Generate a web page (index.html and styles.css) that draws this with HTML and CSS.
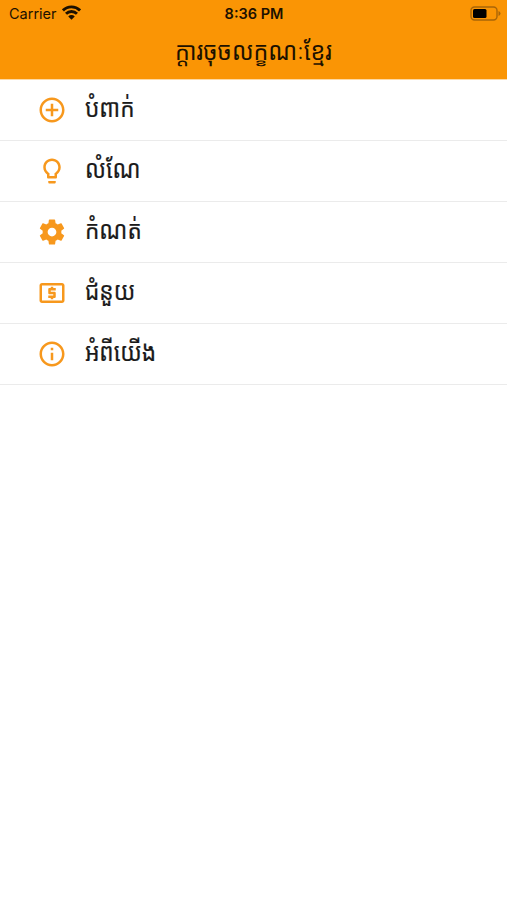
FILE: index.html
```html
<!DOCTYPE html>
<html lang="km">
<head>
    <meta charset="utf-8">
    <meta name="viewport" content="width=device-width, initial-scale=1">
    <title>ក្តារចុចលក្ខណៈខ្មែរ</title>
    <link rel="stylesheet" href="styles.css">
</head>
<body>

<header class="header">
    <div class="status-bar">
        <div class="carrier">
            <span>Carrier</span>
            <svg class="wifi" viewBox="0 0 18 14">
                <path d="M.9 5a11.5 11.5 0 0 1 16.2 0M3.8 8.2a7.4 7.4 0 0 1 10.4 0" fill="none" stroke="#1c1100" stroke-width="2.7"/>
                <path d="M9 13.8L5.9 10.7a4.4 4.4 0 0 1 6.2 0z" fill="#1c1100"/>
            </svg>
        </div>
        <div class="time">8:36 PM</div>
        <div class="battery">
            <svg viewBox="0 0 31 15">
                <rect x="1" y="1" width="26" height="13" rx="3.5" fill="none" stroke="#a86508" stroke-width="1.4"/>
                <rect x="3" y="3" width="13.5" height="9" rx="1.5" fill="#000"/>
                <path d="M28.5 5v5q2-.8 2-2.5t-2-2.5z" fill="#a86508"/>
            </svg>
        </div>
    </div>
    <h1 class="title">ក្តារចុចលក្ខណៈខ្មែរ</h1>
</header>

<ul class="menu">
    <li class="menu-item">
        <svg class="icon" viewBox="0 0 24 24"><path d="M13 7h-2v4H7v2h4v4h2v-4h4v-2h-4V7zm-1-5C6.48 2 2 6.48 2 12s4.48 10 10 10 10-4.48 10-10S17.52 2 12 2zm0 18c-4.41 0-8-3.59-8-8s3.59-8 8-8 8 3.59 8 8-3.59 8-8 8z"/></svg>
        <span class="label">បំពាក់</span>
    </li>
    <li class="menu-item">
        <svg class="icon" viewBox="0 0 24 24"><path d="M9 21c0 .55.45 1 1 1h4c.55 0 1-.45 1-1v-1H9v1zm3-19C8.14 2 5 5.14 5 9c0 2.38 1.19 4.47 3 5.74V17c0 .55.45 1 1 1h6c.55 0 1-.45 1-1v-2.26c1.81-1.27 3-3.36 3-5.74 0-3.86-3.14-7-7-7zm2.85 11.1l-.85.6V16h-4v-2.3l-.85-.6C7.8 12.16 7 10.63 7 9c0-2.76 2.24-5 5-5s5 2.24 5 5c0 1.63-.8 3.16-2.15 4.1z"/></svg>
        <span class="label">លំណែ</span>
    </li>
    <li class="menu-item">
        <svg class="icon" viewBox="0 0 24 24"><path d="M19.43 12.98c.04-.32.07-.64.07-.98s-.03-.66-.07-.98l2.11-1.65c.19-.15.24-.42.12-.64l-2-3.46c-.12-.22-.39-.3-.61-.22l-2.49 1c-.52-.4-1.08-.73-1.69-.98l-.38-2.65C14.46 2.18 14.25 2 14 2h-4c-.25 0-.46.18-.49.42l-.38 2.65c-.61.25-1.17.59-1.69.98l-2.49-1c-.23-.09-.49 0-.61.22l-2 3.46c-.13.22-.07.49.12.64l2.11 1.65c-.04.32-.07.65-.07.98s.03.66.07.98l-2.11 1.65c-.19.15-.24.42-.12.64l2 3.46c.12.22.39.3.61.22l2.49-1c.52.4 1.08.73 1.69.98l.38 2.65c.03.24.24.42.49.42h4c.25 0 .46-.18.49-.42l.38-2.65c.61-.25 1.17-.59 1.69-.98l2.49 1c.23.09.49 0 .61-.22l2-3.46c.12-.22.07-.49-.12-.64l-2.11-1.65zM12 15.5c-1.93 0-3.5-1.57-3.5-3.5s1.57-3.5 3.5-3.5 3.5 1.57 3.5 3.5-1.57 3.5-3.5 3.5z"/></svg>
        <span class="label">កំណត់</span>
    </li>
    <li class="menu-item">
        <svg class="icon" viewBox="0 0 24 24"><path d="M11 17h2v-1h1c.55 0 1-.45 1-1v-3c0-.55-.45-1-1-1h-3v-1h4V8h-2V7h-2v1h-1c-.55 0-1 .45-1 1v3c0 .55.45 1 1 1h3v1H9v2h2v1zm9-13H4c-1.11 0-1.99.89-1.99 2L2 18c0 1.11.89 2 2 2h16c1.11 0 2-.89 2-2V6c0-1.11-.89-2-2-2zm0 14H4V6h16v12z"/></svg>
        <span class="label">ជំនួយ</span>
    </li>
    <li class="menu-item">
        <svg class="icon" viewBox="0 0 24 24"><path d="M11 7h2v2h-2V7zm0 4h2v6h-2v-6zm1-9C6.48 2 2 6.48 2 12s4.48 10 10 10 10-4.48 10-10S17.52 2 12 2zm0 18c-4.41 0-8-3.59-8-8s3.59-8 8-8 8 3.59 8 8-3.59 8-8 8z"/></svg>
        <span class="label">អំពីយើង</span>
    </li>
</ul>

</body>
</html>
```

FILE: styles.css
```css
body {
    font-family: Inter, "Noto Sans Khmer", "Khmer OS", "Noto Sans", sans-serif;
    margin: 0;
    padding: 0;
    background: #fff;
    color: #1a1a1a;
}
.header {
    box-sizing: border-box;
    height: 80px;
    background-color: #fa9505;
    background-clip: padding-box;
    border-bottom: 1px solid #fdd9a4;
    color: #1c1100;
}
.status-bar {
    display: grid;
    grid-template-columns: 1fr auto 1fr;
    align-items: center;
    height: 27px;
    padding: 0 6px 0 9px;
    font-size: 14.5px;
}
.carrier {
    display: flex;
    align-items: center;
    gap: 5px;
}
.wifi {
    width: 19px;
    height: 15px;
    margin-top: -2px;
}
.time {
    margin-right: 2px;
    font-weight: 600;
}
.battery {
    display: flex;
    justify-content: flex-end;
}
.battery svg {
    width: 31px;
    height: 15px;
}
.title {
    margin: 0;
    font-size: 23.3px;
    font-weight: 400;
    line-height: 48px;
    text-align: center;
    transform: scaleY(1.08);
}

.menu {
    list-style: none;
    margin: 0;
    padding: 0;
}
.menu-item {
    box-sizing: border-box;
    display: flex;
    align-items: center;
    height: 61px;
    padding-left: 37px;
    border-bottom: 1px solid #ebebeb;
}
.icon {
    width: 30px;
    height: 30px;
    margin-right: 18px;
    fill: #f7981d;
}
.label {
    font-size: 22.6px;
    line-height: 56px;
    padding-bottom: 4px;
    transform: scaleY(1.12);
    -webkit-text-stroke: 0.2px;
}
```
